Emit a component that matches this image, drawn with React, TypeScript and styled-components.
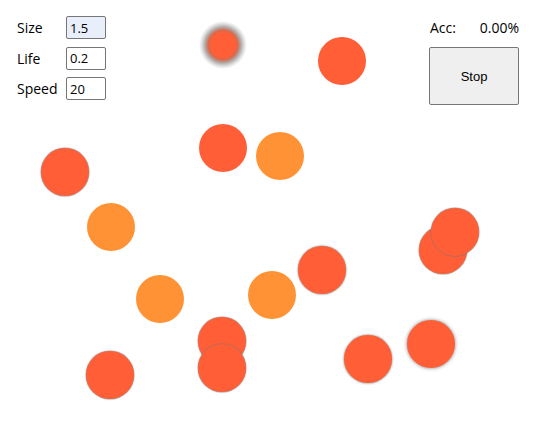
import React from "react";
import styled, { createGlobalStyle } from "styled-components";

const GlobalStyle = createGlobalStyle`
  html, body {
    margin: 0;
    padding: 0;
    background: #fff;
  }
  body {
    font-family: "Open Sans", "Noto Sans", sans-serif;
    color: #000;
  }
`;

const Stage = styled.div`
  position: relative;
  width: 536px;
  height: 447px;
  overflow: hidden;
  background: #fff;
`;

const TopBar = styled.div`
  position: relative;
  z-index: 2;
  display: flex;
  justify-content: space-between;
  align-items: flex-start;
  padding: 16px 17px 0 17px;
`;

const Settings = styled.div`
  display: grid;
  grid-template-columns: 49px 40px;
  row-gap: 7.5px;
  align-items: center;
`;

const Label = styled.label`
  font-size: 14px;
  line-height: 23px;
`;

const Field = styled.input<{ $active?: boolean }>`
  box-sizing: border-box;
  width: 40px;
  height: 23px;
  padding: 0 3px;
  border: 1px solid #767676;
  border-radius: 2px;
  background: ${(p) => (p.$active ? "#e8eefa" : "#fff")};
  font-family: "Open Sans", "Noto Sans", sans-serif;
  font-size: 13px;
  color: #000;
  outline: none;
`;

const Side = styled.div`
  display: flex;
  flex-direction: column;
  align-items: stretch;
  gap: 9px;
  margin-top: 2px;
`;

const AccRow = styled.div`
  display: flex;
  justify-content: space-between;
  font-size: 14px;
  line-height: 20px;
  padding-left: 1px;
`;

const StopButton = styled.button`
  width: 90px;
  height: 58px;
  border: 1px solid #767676;
  border-radius: 2px;
  background: #efefef;
  font-family: "Liberation Sans", Arial, sans-serif;
  font-size: 13px;
  color: #000;
`;

const Dot = styled.div<{ $orange?: boolean }>`
  position: absolute;
  width: 48px;
  height: 48px;
  margin: -24px 0 0 -24px;
  border-radius: 50%;
  background: ${(p) => (p.$orange ? "#ff9234" : "#ff5e36")};
`;

const FuzzyDot = styled.div`
  position: absolute;
  width: 48px;
  height: 48px;
  margin: -24px 0 0 -24px;
  border-radius: 50%;
  background: radial-gradient(
    circle closest-side,
    #ff5e36 0%,
    #ff5e36 50%,
    #d86a4e 62%,
    rgba(140, 130, 128, 0.7) 74%,
    rgba(160, 160, 160, 0.35) 88%,
    rgba(200, 200, 200, 0) 100%
  );
`;

type Particle = { x: number; y: number; orange?: boolean; blur?: number };

const particles: Particle[] = [
  { x: 342, y: 61 },
  { x: 223, y: 148 },
  { x: 280, y: 156, orange: true },
  { x: 65, y: 172, blur: 1 },
  { x: 111, y: 227, orange: true },
  { x: 443, y: 250, blur: 1 },
  { x: 455, y: 232, blur: 1 },
  { x: 322, y: 270, blur: 1.5 },
  { x: 272, y: 295, orange: true },
  { x: 160, y: 299, orange: true },
  { x: 222, y: 341, blur: 1 },
  { x: 222, y: 368, blur: 1 },
  { x: 110, y: 375, blur: 1 },
  { x: 368, y: 359, blur: 2 },
  { x: 431, y: 344, blur: 3.5 },
];

export default function App() {
  return (
    <Stage>
      <GlobalStyle />
      <FuzzyDot style={{ left: 223, top: 45 }} />
      {particles.map((p, i) => (
        <Dot
          key={i}
          $orange={p.orange}
          style={{
            left: p.x,
            top: p.y,
            boxShadow: p.blur ? `0 0 ${p.blur}px 0.5px rgba(120,120,120,0.75)` : undefined,
          }}
        />
      ))}
      <TopBar>
        <Settings>
          <Label>Size</Label>
          <Field $active defaultValue="1.5" />
          <Label>Life</Label>
          <Field defaultValue="0.2" />
          <Label>Speed</Label>
          <Field defaultValue="20" />
        </Settings>
        <Side>
          <AccRow>
            <span>Acc:</span>
            <span>0.00%</span>
          </AccRow>
          <StopButton>Stop</StopButton>
        </Side>
      </TopBar>
    </Stage>
  );
}
